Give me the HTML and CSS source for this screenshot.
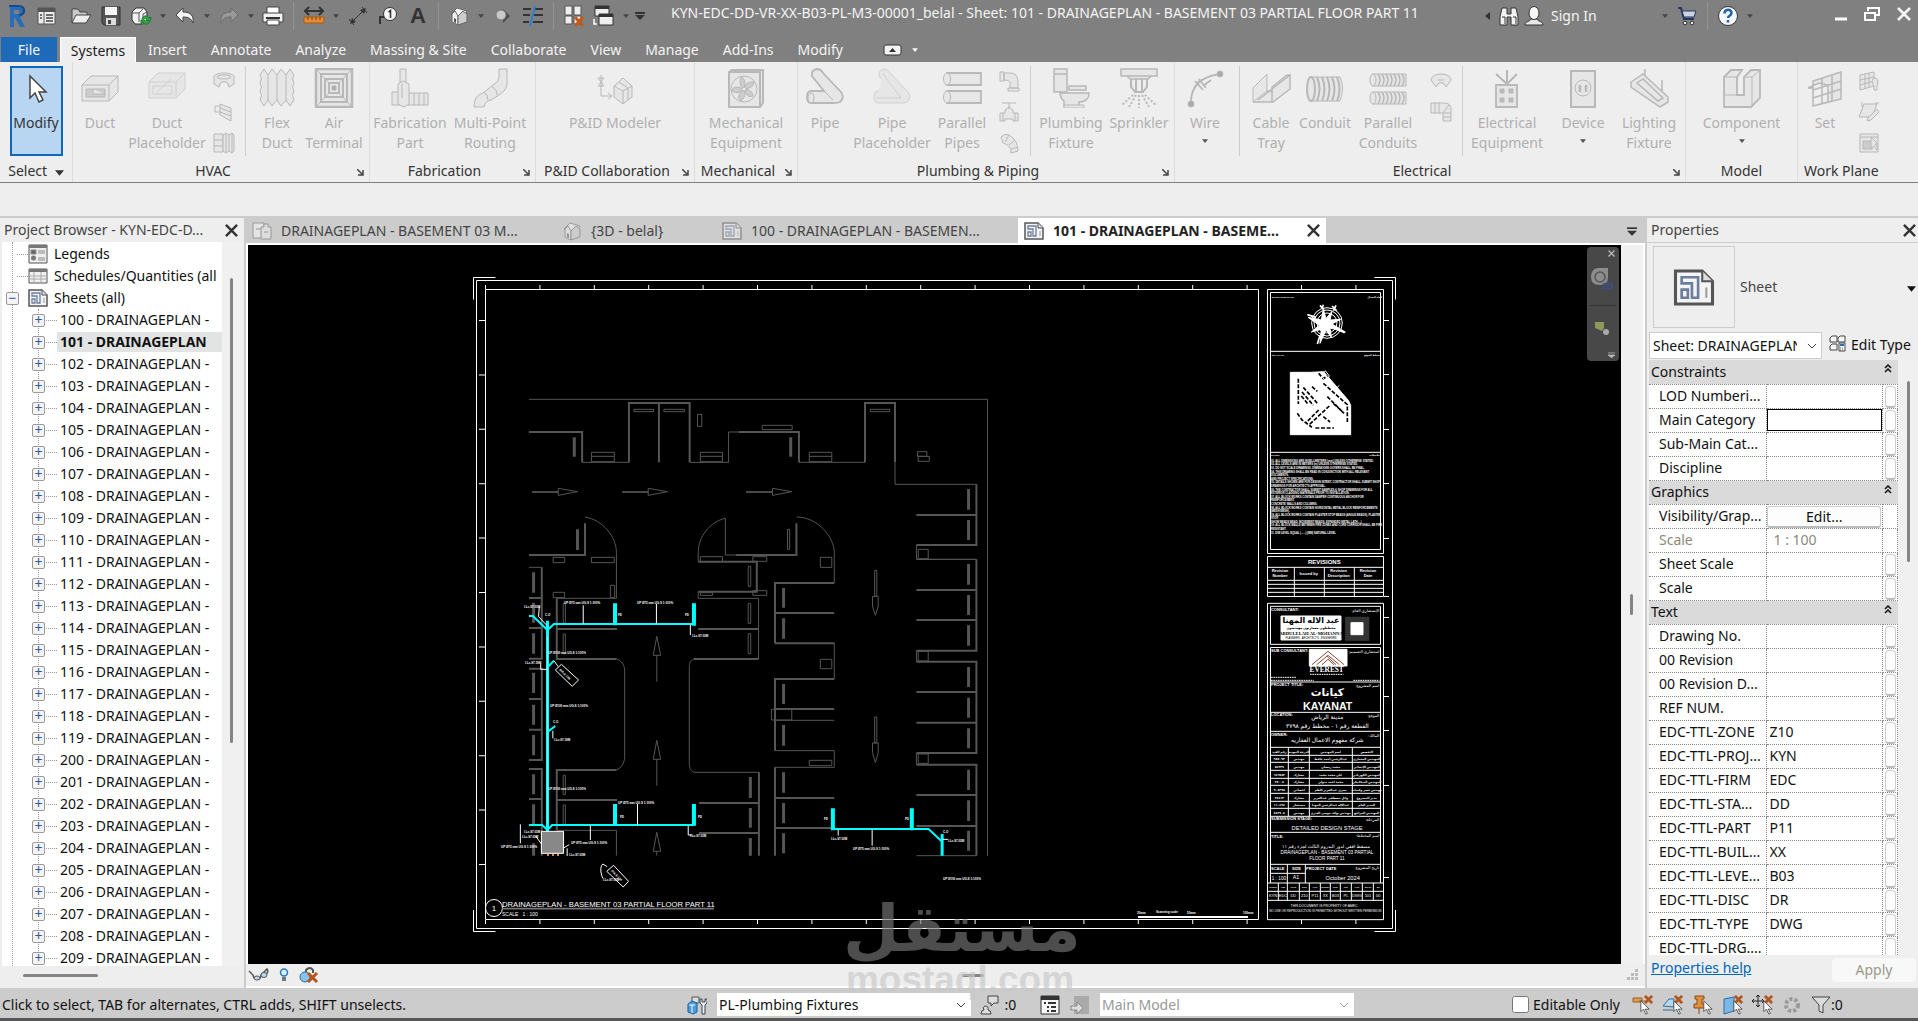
FILE: index.html
```html
<!DOCTYPE html>
<html lang="en">
<head>
  <meta charset="UTF-8">
  <title>KYN-EDC-DD-VR-XX-B03-PL-M3-00001_belal</title>
  <link rel="stylesheet" href="styles.css">
</head>
<body>

  <!-- shared icons -->
  <svg class="defs" aria-hidden="true">
    <symbol id="sheet" viewBox="0 0 20 18">
      <path d="M1 1h13l5 5v11H1z" fill="#f4f4f4" stroke="#555" stroke-width="1.5"/>
      <path d="M14 1v5h5" fill="#ddd" stroke="#555"/>
      <path d="M4 4h8v10H9V7H4zM4 10h3v4H4z" fill="none" stroke="#6b7f9c" stroke-width="1.3"/>
      <path d="M16 9v5" stroke="#999"/>
    </symbol>
    <symbol id="house" viewBox="0 0 20 20">
      <path d="M2 8l6-6 10 3-5 7z" fill="#f4f4f4" stroke="#666"/>
      <path d="M3 8v8l6 3v-9l-3-5z" fill="#eee" stroke="#666"/>
      <path d="M9 10l5-5 4 3v8l-9 3z" fill="#ccc" stroke="#666"/>
      <path d="M5 12l2 1v4l-2-1z" fill="#555"/>
    </symbol>
    <symbol id="caret" viewBox="0 0 8 5"><path d="M0 0h8L4 5z" fill="currentColor"/></symbol>
    <symbol id="close" viewBox="0 0 14 14"><path d="M1 1l12 12M13 1L1 13" stroke="currentColor" stroke-width="2.6"/></symbol>
    <symbol id="launch" viewBox="0 0 7 7"><path d="M0 0l5 5M6 1v5H1" fill="none" stroke="#444" stroke-width="1.5"/></symbol>
    <symbol id="chev" viewBox="0 0 10 6"><path d="M1 1l4 4 4-4" fill="none" stroke="currentColor"/></symbol>
    <symbol id="cursor" viewBox="0 0 12 18"><path d="M1 1v13l3-3 3 6 2-1-3-5h5z" fill="#fff" stroke="#444"/></symbol>
    <symbol id="redx" viewBox="0 0 10 10"><path d="M1 1l8 8M9 1L1 9" stroke="#b4561b" stroke-width="3"/></symbol>
  </svg>

  <header class="titlebar">
    <div class="qat">
      <button class="tool" aria-label="Application"><svg width="22" height="24" viewBox="0 0 22 24"><path d="M4 23V3h8c8 0 8 9 2 10l5 10h-5l-5-9H8v9z" fill="#2b6cb8"/><path d="M3 2h9c8 0 8 9 1 9" fill="none" stroke="#194a86" stroke-width="2"/><path d="M8 6h4c2 0 2 4 0 4H8z" fill="#808080"/></svg></button>
      <button class="tool" aria-label="Home"><svg width="20" height="20" viewBox="0 0 20 20"><path d="M1 2h17v16H1z" fill="#eee" stroke="#555"/><path d="M1 2h17v4H1z" fill="#555"/><path d="M7 6v12" stroke="#555"/><path d="M3 9h2M3 12h2M9 9h7M9 12h7M9 15h7" stroke="#444" stroke-width="1.5"/></svg></button>
      <button class="tool tool-gap" aria-label="Open"><svg width="22" height="18" viewBox="0 0 22 18"><path d="M2 16V2h6l2 3h7v3" fill="#c9c9c9" stroke="#444"/><path d="M2 16l4-8h15l-5 8z" fill="#eee" stroke="#444"/></svg></button>
      <button class="tool" aria-label="Save"><svg width="20" height="20" viewBox="0 0 20 20"><path d="M1 1h18v18H3l-2-2z" fill="#555" stroke="#333"/><path d="M4 1h12v8H4z" fill="#f4f4f4"/><path d="M5 12h10v7H5z" fill="#ddd"/><path d="M7 14h3v4H7z" fill="#444"/></svg></button>
      <button class="tool" aria-label="Synchronize"><svg width="22" height="20" viewBox="0 0 22 20"><path d="M2 6l4-4h8l3 4v9l-4 3H5l-3-4z" fill="#f2f2f2" stroke="#333"/><path d="M2 7h7v9M9 7l4-4M13 8v8M13 8l4-2" fill="none" stroke="#555"/><path d="M12 13c1-4 6-4 7-1l2-1-1 4-4-1 1-1M20 15c-1 4-6 4-7 1l-2 2v-4h4" fill="#35a34a" stroke="#1d7c30"/></svg></button>
      <button class="drop" aria-label="Synchronize options"><svg width="6" height="4"><use href="#caret"/></svg></button>
      <button class="tool" aria-label="Undo"><svg width="20" height="18" viewBox="0 0 20 18"><path d="M1 8l7-7v4c8 0 11 4 10 11-2-5-5-6-10-6v5z" fill="#f4f4f4" stroke="#444"/></svg></button>
      <button class="drop" aria-label="Undo list"><svg width="6" height="4"><use href="#caret"/></svg></button>
      <button class="tool" aria-label="Redo"><svg width="20" height="18" viewBox="0 0 20 18"><path d="M19 8l-7-7v4C4 5 1 9 2 16c2-5 5-6 10-6v5z" fill="#999" stroke="#6c6c6c"/></svg></button>
      <button class="drop" aria-label="Redo list"><svg width="6" height="4"><use href="#caret"/></svg></button>
      <button class="tool" aria-label="Print"><svg width="22" height="20" viewBox="0 0 22 20"><path d="M5 1h12v7H5z" fill="#fff" stroke="#444"/><path d="M1 7h20v9H1z" fill="#f2f2f2" stroke="#444"/><path d="M4 11h14v2H4z" fill="#333"/><path d="M5 14h12v5H5z" fill="#fff" stroke="#444"/></svg></button>
      <span class="qsep"></span>
      <button class="tool" aria-label="Measure"><svg width="22" height="20" viewBox="0 0 22 20"><path d="M2 5h18M6 1L2 5l4 4M16 1l4 4-4 4" fill="none" stroke="#333" stroke-width="2"/><path d="M1 11h20v6H1z" fill="#e58a35" stroke="#a85a13"/><path d="M5 11v3M9 11v3M13 11v3M17 11v3" stroke="#7a3f0a"/></svg></button>
      <button class="drop" aria-label="Measure options"><svg width="6" height="4"><use href="#caret"/></svg></button>
      <button class="tool" aria-label="Aligned dimension"><svg width="22" height="22" viewBox="0 0 22 22"><path d="M5 17L17 5M2 14l5 6M15 2l5 6" fill="none" stroke="#333"/><path d="M3 19l2-6 4 4zM19 3l-2 6-4-4z" fill="#333"/></svg></button>
      <button class="tool" aria-label="Tag"><svg width="20" height="20" viewBox="0 0 20 20"><path d="M2 18v-7h6" fill="none" stroke="#333" stroke-width="2"/><circle cx="12" cy="8" r="6.5" fill="#f6f6f6" stroke="#333"/><path d="M10.500 6l2-1.500V12" fill="none" stroke="#333" stroke-width="1.600"/></svg></button>
      <button class="tool tool-a" aria-label="Text">A</button>
      <span class="qsep"></span>
      <button class="tool" aria-label="3D view"><svg width="20" height="20"><use href="#house"/></svg></button>
      <button class="drop" aria-label="3D view options"><svg width="6" height="4"><use href="#caret"/></svg></button>
      <button class="tool" aria-label="Section"><svg width="18" height="20" viewBox="0 0 18 20"><path d="M9 3l7 7-7 7z" fill="#4b4b4b"/><circle cx="7" cy="9" r="5" fill="#c9c9c9" stroke="#777"/></svg></button>
      <button class="tool" aria-label="Thin lines"><svg width="22" height="20" viewBox="0 0 22 20"><path d="M1 3h8M13 3h8M1 9h7M12 9h9M1 16h6M11 16h10" stroke="#333" stroke-width="2"/><path d="M13 0L8 20" stroke="#2f7fd0" stroke-width="2"/></svg></button>
      <span class="qsep"></span>
      <button class="tool" aria-label="Close inactive views"><svg width="22" height="22" viewBox="0 0 22 22"><path d="M2 1h7v9H2zM11 1h7v9h-7zM2 11h7v8H2zM11 11h7v8h-7z" fill="#eee" stroke="#555"/><path d="M12 12l8 9M20 12l-8 9" stroke="#c05a16" stroke-width="3"/></svg></button>
      <button class="tool" aria-label="Switch windows"><svg width="22" height="22" viewBox="0 0 22 22"><path d="M2 1h14v10H2z" fill="#eee" stroke="#333"/><path d="M2 1h14v3H2z" fill="#333"/><path d="M6 9h14v11H6z" fill="#eee" stroke="#333"/><path d="M6 9h14v3H6z" fill="#333"/><path d="M1 14v5h3" fill="none" stroke="#fff" stroke-width="1.5"/></svg></button>
      <button class="drop" aria-label="Window list"><svg width="6" height="4"><use href="#caret"/></svg></button>
      <button class="drop" aria-label="Customize toolbar"><svg width="10" height="8" viewBox="0 0 10 8"><path d="M0 1h10" stroke="#333" stroke-width="2"/><path d="M0 3h10L5 8z" fill="#333"/></svg></button>
    </div>
    <h1 class="doc-title">KYN-EDC-DD-VR-XX-B03-PL-M3-00001_belal - Sheet: 101 - DRAINAGEPLAN - BASEMENT 03 PARTIAL FLOOR PART 11</h1>
    <div class="account">
      <button class="drop" aria-label="Collapse search"><svg width="5" height="8" viewBox="0 0 5 8"><path d="M5 0v8L0 4z" fill="#333"/></svg></button>
      <button class="tool" aria-label="Search"><svg width="20" height="20" viewBox="0 0 20 20"><path d="M3 2h5v6h4V2h5l2 9v8h-7v-8H8v8H1v-8z" fill="#f2f2f2" stroke="#333"/><path d="M3 11h3v7M14 11h3v7" fill="none" stroke="#333"/></svg></button>
      <button class="sign"><svg width="20" height="20" viewBox="0 0 20 20"><path d="M1 19c0-4 5-3 6-6h6c1 3 6 2 6 6z" fill="#e8e8e8" stroke="#333"/><ellipse cx="10" cy="7" rx="5" ry="6.500" fill="#f6f6f6" stroke="#333"/></svg>Sign In</button>
      <button class="drop" aria-label="Account menu"><svg width="6" height="4"><use href="#caret"/></svg></button>
      <button class="tool" aria-label="App store"><svg width="20" height="20" viewBox="0 0 20 20"><path d="M1 2h3l3 11h10" fill="none" stroke="#26365e" stroke-width="2"/><path d="M5 5h14l-2 6H7z" fill="#cdd3e0" stroke="#26365e"/><circle cx="8" cy="17" r="1.800" fill="#eee" stroke="#333"/><circle cx="15" cy="17" r="1.800" fill="#eee" stroke="#333"/></svg></button>
      <span class="qsep"></span>
      <button class="tool" aria-label="Help"><svg width="22" height="22" viewBox="0 0 22 22"><circle cx="11" cy="11" r="9.500" fill="#f6f9fc" stroke="#333"/><path d="M7.500 8.500c0-5 7-5 7-.5 0 3-3.500 2.500-3.500 5M11 15v2.500" fill="none" stroke="#1e62b4" stroke-width="2.500"/></svg></button>
      <button class="drop" aria-label="Help menu"><svg width="6" height="4"><use href="#caret"/></svg></button>
    </div>
    <div class="winbtns">
      <button aria-label="Minimize"><svg width="12" height="14" viewBox="0 0 12 14"><path d="M0 12h12" stroke="#fff" stroke-width="3"/></svg></button>
      <button aria-label="Restore"><svg width="16" height="14" viewBox="0 0 16 14"><path d="M4 4V1h11v7h-4M1 6h10v7H1z" fill="none" stroke="#fff" stroke-width="2"/></svg></button>
      <button aria-label="Close"><svg width="14" height="14"><use href="#close"/></svg></button>
    </div>
  </header>

  <nav class="tabs">
    <button class="tab file">File</button>
    <button class="tab active">Systems</button>
    <button class="tab">Insert</button>
    <button class="tab">Annotate</button>
    <button class="tab">Analyze</button>
    <button class="tab">Massing &amp; Site</button>
    <button class="tab">Collaborate</button>
    <button class="tab">View</button>
    <button class="tab">Manage</button>
    <button class="tab">Add-Ins</button>
    <button class="tab">Modify</button>
    <button class="tab-toggle" aria-label="Minimize ribbon"><svg width="19" height="12" viewBox="0 0 19 12"><rect x="1" y="1" width="17" height="10" rx="2" fill="#f2f2f2" stroke="#333"/><path d="M6 8h7L9.500 4z" fill="#333"/></svg><svg width="6" height="4"><use href="#caret"/></svg></button>
  </nav>

  <main class="ribbon">
    <section class="panel p-select">
      <div class="tools"><button class="big modify"><svg width="40" height="40" viewBox="0 0 40 40"><path d="M14 8v22l5-5 4 9 4-2-4-8h7z" fill="#fff" stroke="#444" stroke-width="1.500"/></svg>Modify</button></div>
      <div class="caption">Select <svg width="9" height="6"><use href="#caret"/></svg></div>
    </section>

    <section class="panel p-hvac">
      <div class="tools">
        <button class="big w54" disabled><svg width="40" height="40" viewBox="0 0 40 40"><path d="M2 17L11 8h27v16l-9 9H2z"/><path d="M2 17h27v16M29 17l9-9"/><path d="M6 21h19v8H6zM13 21v5h12" fill="#ccc"/></svg>Duct</button>
        <button class="big w80 faint" disabled><svg width="40" height="40" viewBox="0 0 40 40"><path d="M2 14L11 5h27v16l-9 9H2z"/><path d="M2 14h27v16M29 14l9-9"/><path d="M6 18h19v8H6zM10 24L24 11"/></svg>Duct Placeholder</button>
        <div class="smalls">
          <button disabled aria-label="Duct fitting"><svg width="22" height="22" viewBox="0 0 22 22"><path d="M1 6c3-4 17-4 20 0v8l-5 3-2-5H8l-2 5-5-3z"/><ellipse cx="11" cy="7" rx="7" ry="2"/></svg></button>
          <button disabled aria-label="Duct accessory"><svg width="22" height="22" viewBox="0 0 22 22"><path d="M7 3l11 4v13L7 14zM7 7l11 4M7 11l11 4M2 5h5M2 11h5M2 5v6"/></svg></button>
          <button disabled aria-label="Convert to flex duct"><svg width="22" height="22" viewBox="0 0 22 22"><path d="M1 2h9v18H1zM1 8h9M1 14h9"/><path d="M10 3l3-2 3 2 3-2 2 2v16l-2 2-3-2-3 2-3-2zM13 2v18M16 3v16M19 2v18"/></svg></button>
        </div>
        <span class="rsep"></span>
        <button class="big w54" disabled><svg width="40" height="40" viewBox="0 0 40 40"><path d="M3 7l4-6 4 6 4-6 5 6 4-6 5 6 4-6 4 6q-3 4 0 8-3 4 0 8-3 4 0 9l-4 6-4-6-5 6-4-6-5 6-4-6-4 6-4-6q3-5 0-9 3-4 0-8 3-4 0-8z"/><path d="M11 7v25M20 7v25M29 7v25"/></svg>Flex Duct</button>
        <button class="big w60" disabled><svg width="40" height="40" viewBox="0 0 40 40"><path d="M2 1h36v38H2z" stroke-width="2.500"/><path d="M7 6h26v28H7zM11 11h18v18H11zM15 15h10v10H15z" stroke-width="2"/><path d="M18 18h4v4h-4z" fill="#aaa"/><path d="M2 1l13 14M38 1L25 15M2 39l13-14M38 39L25 25"/></svg>Air Terminal</button>
      </div>
      <div class="caption">HVAC<button class="launch" aria-label="Mechanical settings"><svg width="7" height="7"><use href="#launch"/></svg></button></div>
    </section>

    <section class="panel p-fab">
      <div class="tools">
        <button class="big w80" disabled><svg width="40" height="40" viewBox="0 0 40 40"><path d="M10 1h6v14h-6zM2 24h10v13H2zM18 25h20v12H18z"/><path d="M8 16l5-3 6 3v20l-5 3-6-3zM24 25v12M29 25v12M34 25v12M12 16v14"/></svg>Fabrication Part</button>
        <button class="big w80" disabled><svg width="40" height="40" viewBox="0 0 40 40"><path d="M29 1h8v15q0 6-8 11l-8 5q-6 1-7 7H4q0-12 9-14l10-8q6-3 6-8z"/><path d="M22 19q5 2 5 8M14 24q4 3 4 8"/></svg>Multi-Point Routing</button>
      </div>
      <div class="caption">Fabrication<button class="launch" aria-label="Fabrication settings"><svg width="7" height="7"><use href="#launch"/></svg></button></div>
    </section>

    <section class="panel p-pid">
      <div class="tools">
        <button class="big" disabled><svg width="40" height="40" viewBox="0 0 40 40"><path d="M6 7v21h10M3 10h6l-6 8h6zM13 25l4 3-4 3" fill="none"/><path d="M19 18l9-8 9 8v11l-9 7-9-7zM19 18l9 5 9-5M28 23v13M24 14l9 6v12"/></svg>P&amp;ID Modeler</button>
      </div>
      <div class="caption">P&amp;ID Collaboration<button class="launch" aria-label="P&amp;ID settings"><svg width="7" height="7"><use href="#launch"/></svg></button></div>
    </section>

    <section class="panel p-mech">
      <div class="tools">
        <button class="big w80" disabled><svg width="40" height="40" viewBox="0 0 40 40"><path d="M3 4l3-2h31v33l-3 4H3zM3 4h31v35" stroke-width="2"/><circle cx="18" cy="21" r="13"/><path d="M18 21q-6-4-3-12 6 2 3 12 2-8 10-7 0 6-10 7 8 0 9 7-6 3-9-7 3 7-3 12-6-4 3-12-6 6-12 2 1-7 12-2" fill="#ccc"/><circle cx="18" cy="21" r="2" fill="#eee"/></svg>Mechanical Equipment</button>
      </div>
      <div class="caption">Mechanical<button class="launch" aria-label="Equipment settings"><svg width="7" height="7"><use href="#launch"/></svg></button></div>
    </section>

    <section class="panel p-plumb">
      <div class="tools">
        <button class="big w54" disabled><svg width="40" height="40" viewBox="0 0 40 40"><path d="M7 8q-1-6 5-7 4 0 6 4l18 19q4 6-1 10-2 1-6 1H6q-4 0-4-6t4-6h13L7 8z" stroke-width="1.800"/><ellipse cx="6" cy="30" rx="3" ry="5"/><path d="M19 23l9 9"/></svg>Pipe</button>
        <button class="big w80 faint" disabled><svg width="40" height="40" viewBox="0 0 40 40"><path d="M7 8q-1-6 5-7 4 0 6 4l18 19q4 6-1 10-2 1-6 1H6q-4 0-4-6t4-6h13L7 8z"/><path d="M5 30h24L11 6"/></svg>Pipe Placeholder</button>
        <button class="big w60" disabled><svg width="40" height="40" viewBox="0 0 40 40"><path d="M5 5h34v12H5zM5 23h34v12H5z" stroke-width="1.800"/><ellipse cx="5" cy="11" rx="3.500" ry="6"/><ellipse cx="5" cy="29" rx="3.500" ry="6"/></svg>Parallel Pipes</button>
        <div class="smalls">
          <button disabled aria-label="Pipe fitting"><svg width="22" height="22" viewBox="0 0 22 22"><path d="M2 2h4v9H2zM6 3h6q8 0 8 9v6h-8v-6q0-2-6-2zM10 18h11v3H10z"/></svg></button>
          <button disabled aria-label="Pipe accessory"><svg width="22" height="22" viewBox="0 0 22 22"><path d="M4 2h14M11 2v6M7 9l4-3 4 3v3h5v8h-5v-2H7v2H2v-8h5zM5 12v8M17 12v8"/></svg></button>
          <button disabled aria-label="Flex pipe"><svg width="22" height="22" viewBox="0 0 22 22"><path d="M3 5q3-4 8-2 9 5 9 16l-7 2q1-7-8-10z"/><path d="M7 10l4-7M11 13l6-5M13 17l7-2"/></svg></button>
        </div>
        <span class="rsep"></span>
        <button class="big w72" disabled><svg width="40" height="40" viewBox="0 0 40 40"><path d="M3 1h13v23H3zM3 6h13" stroke-width="1.500"/><path d="M18 18h17v4H18zM11 25h27q0 9-10 9v4H13v-5q-4-3-4-9z" stroke-width="1.500"/><path d="M13 37h20v3H13z"/></svg>Plumbing Fixture</button>
        <button class="big w64" disabled><svg width="40" height="40" viewBox="0 0 40 40"><path d="M2 1h36v7H2zM8 8h24l-3 3H11z" stroke-width="1.500"/><path d="M12 11v8l4 5M28 11v8l-4 5M17 11v12M23 11v12M15 24h10" stroke-width="2"/><path d="M14 27L3 37M17 27l-7 12M20 27v13M23 27l7 12M26 27l11 10" stroke-dasharray="2 2" stroke-width="2"/></svg>Sprinkler</button>
      </div>
      <div class="caption">Plumbing &amp; Piping<button class="launch" aria-label="Piping settings"><svg width="7" height="7"><use href="#launch"/></svg></button></div>
    </section>

    <section class="panel p-elec">
      <div class="tools">
        <button class="big w60" disabled><svg width="40" height="40" viewBox="0 0 40 40"><path d="M6 36Q5 10 35 6M10 13l8 9M14 11l7 9M9 20l6-8M18 18l8-6" fill="none" stroke-width="1.800"/><circle cx="6" cy="36" r="3" fill="#aaa"/><circle cx="35" cy="6" r="3" fill="#aaa"/></svg>Wire<svg class="more" width="6" height="4"><use href="#caret"/></svg></button>
        <span class="rsep"></span>
        <button class="big w54" disabled><svg width="40" height="40" viewBox="0 0 40 40"><path d="M2 20L16 6v17L2 34z"/><path d="M2 34h20L39 21V7L21 21 7 32M16 23h6M39 7h-3L21 19v15" stroke-width="1.500"/></svg>Cable Tray</button>
        <button class="big w54" disabled><svg width="40" height="40" viewBox="0 0 40 40"><path d="M6 9h29q5 10 0 24H6z"/><ellipse cx="6" cy="21" rx="4" ry="12" stroke-width="2"/><path d="M12 9q5 12 0 24M17 9q5 12 0 24M22 9q5 12 0 24M27 9q5 12 0 24M32 9q5 12 0 24" fill="none" stroke-width="2"/></svg>Conduit</button>
        <button class="big w72" disabled><svg width="40" height="40" viewBox="0 0 40 40"><path d="M5 6h33v12H5zM5 24h33v12H5z"/><ellipse cx="5" cy="12" rx="3" ry="6"/><ellipse cx="5" cy="30" rx="3" ry="6"/><path d="M10 6q4 6 0 12M14 6q4 6 0 12M18 6q4 6 0 12M22 6q4 6 0 12M26 6q4 6 0 12M30 6q4 6 0 12M34 6q4 6 0 12M10 24q4 6 0 12M14 24q4 6 0 12M18 24q4 6 0 12M22 24q4 6 0 12M26 24q4 6 0 12M30 24q4 6 0 12M34 24q4 6 0 12" fill="none" stroke-width="1.500"/></svg>Parallel Conduits</button>
        <div class="smalls">
          <button disabled aria-label="Cable tray fitting"><svg width="22" height="22" viewBox="0 0 22 22"><path d="M1 10q1-6 10-6t10 6l-5 7-3-4H9l-3 4z"/><path d="M8 10h6"/></svg></button>
          <button disabled aria-label="Conduit fitting"><svg width="22" height="22" viewBox="0 0 22 22"><path d="M1 2h13q7 0 7 6v12h-8v-8H1z"/><path d="M5 2v10M9 2v10M13 12h8M13 16h8M13 12l6-8"/></svg></button>
        </div>
        <span class="rsep"></span>
        <button class="big w80" disabled><svg width="40" height="40" viewBox="0 0 40 40"><path d="M9 17h21v22H9z" stroke-width="1.800"/><path d="M13 21h4v4h-4zM22 21h4v4h-4zM13 30h4v4h-4zM22 30h4v4h-4z" fill="#bbb"/><path d="M20 2v15M9 6l11 10L30 6" fill="none" stroke-width="2"/></svg>Electrical Equipment</button>
        <button class="big w72" disabled><svg width="40" height="40" viewBox="0 0 40 40"><path d="M8 3h24v36H8z" stroke-width="2"/><circle cx="20" cy="20" r="8"/><path d="M17 17v7M23 17v7" stroke-width="2.500"/></svg>Device<svg class="more" width="6" height="4"><use href="#caret"/></svg></button>
        <button class="big w60" disabled><svg width="40" height="40" viewBox="0 0 40 40"><path d="M2 14l12-8 25 23v5l-8 5L2 19zM8 15l6-4 20 19-5 3zM16 1v7M33 12v12" stroke-width="1.500"/></svg>Lighting Fixture</button>
      </div>
      <div class="caption">Electrical<button class="launch" aria-label="Electrical settings"><svg width="7" height="7"><use href="#launch"/></svg></button></div>
    </section>

    <section class="panel p-model">
      <div class="tools">
        <button class="big w80" disabled><svg width="40" height="40" viewBox="0 0 40 40"><path d="M2 9l7-7h11l-5 7v18h7V9l7-7h9v28l-9 9H2z" stroke-width="1.800"/><path d="M2 9h13M22 9h8l8-7M30 9v30M2 27h13"/></svg>Component<svg class="more" width="6" height="4"><use href="#caret"/></svg></button>
      </div>
      <div class="caption">Model</div>
    </section>

    <section class="panel p-work">
      <div class="tools">
        <button class="big w54" disabled><svg width="40" height="40" viewBox="0 0 40 40"><path d="M3 20h5v18l15-4v-17l-9-2zM8 13l28-9v27L8 38zM17 10v25M27 7v26M8 22l28-9M8 30l28-9" stroke-width="1.500"/></svg>Set</button>
        <div class="smalls">
          <button disabled aria-label="Show plane"><svg width="22" height="22" viewBox="0 0 22 22"><path d="M2 5l14-3v14L2 20zM7 4v15M11 3v14M2 10l14-3M2 15l14-4"/><path d="M14 12q0-4 3-4t3 4l-1 4v4h-3v-4z"/></svg></button>
          <button disabled aria-label="Reference plane"><svg width="22" height="22" viewBox="0 0 22 22"><path d="M6 3h13l-5 13H1zM4 1v5M17 2h4"/><path d="M10 17l9-9 2 3-8 8-4 1z"/></svg></button>
          <button disabled aria-label="Viewer"><svg width="22" height="22" viewBox="0 0 22 22"><path d="M2 2h18v18H2zM2 5h18"/><path d="M5 9h9v8H5z" fill="#ccc"/><path d="M13 5v11l3-2 3 4 1-2-3-4h3z"/></svg></button>
        </div>
      </div>
      <div class="caption left">Work Plane</div>
    </section>
  </main>

  <div class="options"></div>

  <div class="work">
    <aside class="browser">
      <div class="dock-head"><h2>Project Browser - KYN-EDC-D...</h2><button aria-label="Close browser"><svg width="13" height="13"><use href="#close"/></svg></button></div>
      <div class="tree-wrap">
        <div class="tree">
          <ul>
            <li class="node"><span class="twig"></span><svg width="20" height="20" viewBox="0 0 20 20"><path d="M1 1h18v18H1z" fill="#eee" stroke="#555"/><path d="M1 1h18v3H1z" fill="#777"/><path d="M3 6h5v4H3zM10 7h7M10 9h7M10 14h7M10 16h7" stroke="#888" fill="#666"/><circle cx="5.500" cy="14" r="2.500" fill="#777"/></svg>Legends</li>
            <li class="node"><span class="twig"></span><svg width="20" height="16" viewBox="0 0 20 16"><path d="M1 1h18v14H1z" fill="#f0f0f0" stroke="#555"/><path d="M1 1h18v3H1z" fill="#777"/><path d="M6 4v11M13 4v11M1 8h18M1 11h18" stroke="#aaa"/></svg>Schedules/Quantities (all</li>
            <li class="node"><button class="box" aria-label="Collapse">&minus;</button><svg width="20" height="18"><use href="#sheet"/></svg>Sheets (all)</li>
          </ul>
          <ul id="sheets" class="sheets"></ul>
        </div>
        <div class="vscroll"><span class="thumb"></span></div>
      </div>
      <div class="hscroll"><span class="thumb"></span></div>
    </aside>

    <section class="center">
      <div class="doctabs">
        <button class="doctab t1"><svg width="20" height="18" viewBox="0 0 20 18"><path d="M1 1h11v15H1z" fill="#e4e4e4" stroke="#999"/><path d="M9 5h3V2h4v3h3v12H9z" fill="#ddd" stroke="#999"/><path d="M4 7h5M12 10h4" stroke="#999"/></svg>DRAINAGEPLAN - BASEMENT 03 M...</button>
        <button class="doctab t2"><svg class="dim" width="20" height="20"><use href="#house"/></svg>{3D - belal}</button>
        <button class="doctab t3"><svg class="dim" width="20" height="18"><use href="#sheet"/></svg>100 - DRAINAGEPLAN - BASEMEN...</button>
        <button class="doctab current"><svg width="20" height="18"><use href="#sheet"/></svg>101 - DRAINAGEPLAN - BASEME...<svg class="x" width="13" height="13"><use href="#close"/></svg></button>
        <button class="tablist" aria-label="Tab list"><svg width="10" height="9" viewBox="0 0 12 10"><path d="M0 1h12" stroke="#333" stroke-width="2"/><path d="M0 4h12L6 10z" fill="#333"/></svg></button>
      </div>
      <div class="view">
        <div class="canvas">
          <svg class="drawing" viewBox="248 245 1373 719">
            <!-- sheet frame -->
            <g fill="none" stroke="#fff">
              <path d="M473.500 299.500v-22h22M1374.500 277.500h21v22M473.500 910v21.500h22M1374.500 931.500h21V910"/>
              <path d="M476.500 280.500h916v648h-916z"/>
              <path d="M485.500 289.500h773v630h-773z"/>
              <path d="M485 287H1360M485 922H1360" stroke-width="4" stroke-dasharray="1 53.400"/>
              <path d="M482 320v560" stroke-width="6" stroke-dasharray="1 53.400"/>
              <path d="M1384 320.500h5M1384 374.500h5M1384 429.500h5M1384 483.500h5M1384 538.500h5M1384 596.500h5M1384 617.500h5M1384 657.500h5M1384 696.500h5M1384 730.500h5M1384 785.500h5M1384 877.500h5"/>
              <path d="M1138 917h110" stroke-width="2"/>
            </g>

            <!-- architecture underlay -->
            <g class="walls" transform="translate(460 270) scale(.357143 .333333)">
              <path d="M193 388H1477V1757M1218 577V643H1446M743 745V855H773M350 741C400 750 438 800 438 848V985H271M743 745C700 755 667 800 667 848V875M667 965V985H836V1167M438 1167C450 1170 461 1185 461 1200V1460C461 1480 450 1495 438 1500M655 1167C645 1172 642 1180 642 1190V1480C642 1495 648 1507 658 1507H837M438 1681V1757M943 741C1000 741 1048 800 1048 848V939M1048 1120V1227M882 1351H1048M882 1442H1048V1492H882M1278 825V868H1446M1278 1142V1175M1278 1449V1484M1278 1757H1446M271 1681H438M1278 868H1446M342 577H473M643 577H752V486H780M949 577H1134M193 892H229"/>
              <path class="w2" d="M193 486H342V577M473 577V399H643V577M557 399V577M780 486H949V577M1134 577V399H1218V577M193 855H350V760M773 855H942V760M667 875H831V965H667M1446 643V825H1278M1278 735H1446M1446 868V1142H1278M1278 960H1446M1278 1050H1446M1278 1175H1446V1449H1278M1278 1266H1446M1278 1358H1446M1278 1484H1446V1757M1278 1575H1446M1278 1668H1446M229 892V1166H193M193 984H229M193 1074H229M193 1196H229V1470H193M193 1287H229M193 1379H229M193 1497H229V1757M193 1587H229M271 985V1167H438M271 1077H440M438 1500H271V1681M271 1590H440M836 1077H667M655 1167H836M837 1507V1757M669 1599H837M669 1689H837M882 1120V939H1048M882 1120H1048M882 1029H1048M1048 1227H882V1442M882 1317H1048M882 1492V1757M882 1584H1048M882 1674H1048"/>
              <path d="M487 418h55v7h-55zM571 418h58v7h-58zM1149 418h54v7h-54zM665 433h12v36h-12zM846 466h84v13h-84zM368 547h64v28h-64zM368 559h64M673 547h62v28h-62zM673 559h62M978 547h63v28h-63zM978 559h63M1281 545h26v14h-26zM1283 559h31v15h-31zM261 862h32v16h-32zM368 862h64v16h-64zM261 967h32v16h-32zM421 946h12v37h-12zM289 1000h6v60h-6zM289 1092h6v60h-6zM289 1516h6v58h-6zM289 1605h6v58h-6zM917 778h6v60h-6zM807 889h7v60h-7zM807 1000h7v60h-7zM807 1091h7v60h-7zM673 860h62v15h-62zM820 860h39v14h-39zM820 962h39v14h-39zM673 968h34v8h-34zM1009 862h32v30h-32zM1009 1168h32v28h-32zM978 1471h63v16h-63zM872 1318h57v32h-57zM1283 838h28v28h-28zM1283 1144h28v29h-28zM1283 1452h28v28h-28z"/>
              <path class="w3" d="M320 502V560M926 502V560M329 778V840M1424 657V719M1424 750V810M1424 882V944M1424 975V1035M1424 1066V1127M1424 1191V1251M1424 1283V1343M1424 1375V1435M1424 1499V1560M1424 1591V1653M1424 1682V1742M206 907V968M206 998V1058M206 1090V1151M206 1208V1269M206 1304V1364M206 1395V1456M206 1513V1573M206 1603V1664M206 1720V1757M906 954V1013M906 1045V1106M906 1242V1302M906 1365V1427M906 1507V1568M906 1599V1660M906 1690V1750M813 1521V1584M813 1614V1673M813 1704V1757"/>
              <path d="M202 665H275M202 667H275M275 655L329 665 275 676zM454 665H527M454 667H527M527 655L581 665 527 676zM801 665H875M801 667H875M875 655L929 665 875 676zM551 1235V1156M551 1099L562 1156H541zM551 1547V1468M551 1411L562 1468H541zM551 1757V1744M551 1687L562 1744H541zM1161 901h6v78h-6zM1155 979H1171V1008L1163 1036 1155 1008zM1161 1341h6v78h-6zM1155 1419H1171V1448L1163 1478 1155 1448z"/>
            </g>

            <!-- drainage pipes -->
            <g class="pipes" transform="translate(460 270) scale(.357143 .333333)">
              <path d="M193 1038H204L245 1080 263 1062H655M193 1665H230L245 1680 258 1665H655M1044 1677H1312L1350 1715M247 1190L263 1172M247 1384L267 1368"/>
              <path class="w3" d="M245 1052V1684M1350 1692V1757"/>
              <path class="w4" d="M434 1000V1066M655 1000V1067M434 1602V1665M655 1602V1667M1044 1615V1681M1265 1615V1681"/>
            </g>
            <g class="leaders" transform="translate(460 270) scale(.357143 .333333)">
              <path d="M345 1006V1062M550 1002V1062M645 1064V1095M497 1602V1665M365 1665V1710M169 1663V1720M639 1667V1695L650 1695M1059 1679V1697M1154 1677V1727M222 1010L220 1040 243 1066M226 1180V1198H243M263 1172L275 1190M260 1382V1405M1352 1708H1366M212 1698L240 1740M245 1684L232 1702M306 1724L264 1750M300 1735V1758M412 1790L400 1782C390 1790 395 1815 400 1825"/>
              <path d="M245 1100V1660" stroke-opacity=".5"/>
              <path d="M284 1183L332 1230 314 1249 267 1200zM430 1786L472 1834 457 1851 411 1804z"/>
              <path d="M228 1684H290V1750H228z" fill="#888"/>
            </g>
            <path d="M548 854v2M553 854v2M558 854v2" stroke="#d98b4a" stroke-width="2"/>
            <g class="note">
              <text x="564" y="604">UP Ø75 mm UG.S 1:100%</text>
              <text x="637" y="604">UP Ø75 mm UG.S 1:100%</text>
              <text x="548" y="654">UP Ø100 mm UG.S 1:100%</text>
              <text x="550" y="707">UP Ø100 mm UG.S 1:100%</text>
              <text x="548" y="790">UP Ø100 mm UG.S 1:100%</text>
              <text x="618" y="804">UP Ø75 mm UG.S 1:100%</text>
              <text x="571" y="844">UP Ø75 mm UG.S 1:100%</text>
              <text x="501" y="848">UP Ø75 mm UG.S 1:100%</text>
              <text x="853" y="850">UP Ø75 mm UG.S 1:100%</text>
              <text x="943" y="880">UP Ø100 mm UG.S 1:100%</text>
              <text x="524" y="608">I.L=-97.03M</text>
              <text x="692" y="637">I.L=-97.03M</text>
              <text x="525" y="664">I.L=-97.19M</text>
              <text x="554" y="741">I.L=-97.19M</text>
              <text x="690" y="837">I.L=-97.03M</text>
              <text x="831" y="840">I.L=-97.03M</text>
              <text x="948" y="842">I.L=-97.03M</text>
              <text x="524" y="833">I.L=-97.03M</text>
              <text x="522" y="838">I.L=-97.03M</text>
              <text x="569" y="856">I.L=-97.03M</text>
              <text x="603" y="881">I.L=-97.03M</text>
              <text x="545" y="616">C.O</text>
              <text x="553" y="723">C.O</text>
              <text x="943" y="833">C.O</text>
              <text x="618" y="616">FD</text>
              <text x="685" y="616">FD</text>
              <text x="620" y="818">FD</text>
              <text x="698" y="818">FD</text>
              <text x="824" y="820">FD</text>
              <text x="905" y="820">FD</text>
              <text x="1137" y="914">20mm</text>
              <text x="1156" y="913">Scanning scale</text>
              <text x="1187" y="914">50mm</text>
              <text x="1243" y="914">100mm</text>
              <text transform="translate(559 670) rotate(44)">DIA.&amp; 13B</text>
              <text transform="translate(611 871) rotate(46)">DIA.&amp; 13A</text>
            </g>
            <circle cx="494" cy="908" r="8.500" fill="none" stroke="#fff"/>
            <text x="494" y="911" class="view-no">1</text>
            <g class="view-title" transform="translate(502 900) scale(.333333)">
              <text x="0" y="21">DRAINAGEPLAN - BASEMENT 03 PARTIAL FLOOR PART 11</text>
              <text x="0" y="48" class="view-scale">SCALE &#160; 1 : 100</text>
              <path d="M0 26h636" stroke="#777" stroke-width="5"/>
            </g>

            <!-- title block -->
            <g class="block" transform="translate(1240 270) scale(.333333)">
              <path d="M82.500 58.500h348v792h-348zM91.500 67.500h330v771h-330zM91 244h331M91 547h331M82.500 859.500h348v120h-348zM82 892h349M82 931h349M82 943h349M82 955h349M82 967h349M163 892v87M253 892v87M343 892v87"/>
              <path d="M82.500 1000h348v949h-348zM91.500 1009h330v114h-330zM91.500 1839V1132.500h330V1839M91 1236h331M91 1327h331M91 1384h331M91 1432h331M91 1456h331M91 1477h331M91 1501h331M91 1525h331M91 1546h331M91 1570h331M91 1594h331M91 1615h331M91 1639h331M145 1432v207M208 1432v207M337 1432v207M91 1687h331M91 1783h331M91 1810h105M82 1839h349M142 1783v56M196 1783v56M82 1864h349M82 1891h349M115 1839v52M142 1839v52M178 1839v52M208 1839v52M241 1839v52M271 1839v52M301 1839v52M334 1839v52M367 1839v52M400 1839v52"/>
              <!-- north arrow -->
              <circle cx="261" cy="159" r="46"/><circle cx="261" cy="159" r="39"/><circle cx="261" cy="159" r="30"/>
              <path d="M250 118l8 28 18-22-6 26 32-2-26 14 40 24-46-12 4 28-16-22-18 40 4-42-30 8 24-20-34-24 40 8z" fill="#fff"/>
              <path d="M240 106l12 14M250 104l-4 14M276 108l14 14M288 106l-8 16M202 134l26 8M290 178l24 10M240 196l-8 26" stroke-width="5"/>
              <!-- key plan -->
              <path d="M151 307h60l40-2 74 86 7 15v88H151z" fill="#fff"/>
              <path d="M175 326v76M190 352l44 50M186 366l34 40M184 378l20 24M250 340l72 64v56M262 380l50 50M280 400l30 28M236 420l-40 40M268 408l-60 56M226 474h56M172 430l14 20 30 22M236 310l14 16 12-8M250 440l20 16M216 350l16 14" stroke="#000" stroke-width="5" stroke-dasharray="12 5"/>
              <path d="M246 320l10-18 12 16-10 16zM290 354l8-8" />
              <text x="95" y="84">NORTH DIRECTION:</text><text x="382" y="84">اتجاه الشمال</text>
              <text x="95" y="258">KEY PLAN:</text><text x="372" y="258">مخطط الموقع</text>
              <text x="93" y="557">NOTES:</text><text x="388" y="557">ملاحظات</text>
              <g class="notes">
                <text x="93" y="575">01. ALL DIMENSIONS ARE IN MILLIMETERS (mm) UNLESS OTHERWISE STATED.</text>
                <text x="93" y="586">02. ALL LEVELS ARE IN METERS (m) UNLESS OTHERWISE STATED.</text>
                <text x="93" y="597">03. DO NOT SCALE DRAWINGS. DIMENSIONS GOVERN SHALL BE FINAL.</text>
                <text x="93" y="608">04. THIS DRAWING SHALL BE READ IN CONJUNCTION WITH ALL RELEVANT</text>
                <text x="93" y="618">DOCUMENTS,</text>
                <text x="93" y="629">AND PROJECT SPECIFICATIONS.</text>
                <text x="93" y="640">05. DETAILS SHOWN ARE FOR DESIGN INTENT. CONTRACTOR SHALL SUBMIT SHOP</text>
                <text x="93" y="650">DRAWINGS FOR ARCHITECTS APPROVAL.</text>
                <text x="93" y="662">06. THE CONTRACTOR SHALL SUBMIT SAMPLES &amp; SHOP DRAWINGS FOR ALL</text>
                <text x="93" y="673">EXTERIOR CLADDING MATERIALS PRIOR TO INSTALLATION.</text>
                <text x="93" y="683">07. ALL BLOCK WORKS CONTAIN DAMPER CONTINUOUS ANCHOR FOR</text>
                <text x="93" y="694">REINFORCEMENT.</text>
                <text x="93" y="705">CONCRETE WALLS AND COLUMNS.</text>
                <text x="93" y="716">08. ALL BLOCK WORKS CONTAIN HORIZONTAL METAL BLOCK REINFORCEMENTS</text>
                <text x="93" y="727">(MESH MESH).</text>
                <text x="93" y="737">09. ALL BLOCK WORKS CONTAIN PLASTER STOP BEADS (ANGLE BEADS), PLASTER</text>
                <text x="93" y="748">STOP,</text>
                <text x="93" y="759">SHOW BEADS BEAD, MOVEMENT BEADS, EXPANDED METAL LATH....)</text>
                <text x="93" y="769">10. ALL BLOCK WALLS BETWEEN FIRE ZONES AND CORE CORRIDOR SHALL BE FIRE</text>
                <text x="93" y="780">RESISTANT.</text>
                <text x="93" y="792">11. DIM LEVEL EQUAL (......) (MM) NATURAL LEVEL</text>
              </g>
              <text x="253" y="881" class="mid t18 b">REVISIONS</text>
              <g class="mid t12 b">
                <text x="120" y="907">Revision</text><text x="120" y="921">Number</text>
                <text x="206" y="915">Issued by</text>
                <text x="296" y="907">Revision</text><text x="296" y="921">Description</text>
                <text x="384" y="907">Revision</text><text x="384" y="921">Date</text>
              </g>
              <g class="t12 b">
                <text x="93" y="1022">CONSULTANT:</text><text x="93" y="1145">SUB CONSULTANT:</text><text x="93" y="1248">PROJECT TITLE:</text>
                <text x="93" y="1338">LOCATION:</text><text x="93" y="1398">OWNER:</text><text x="93" y="1650">SUBMISSION STAGE:</text><text x="93" y="1703">TITLE:</text>
                <text x="93" y="1799">SCALE</text><text x="156" y="1799">SIZE</text><text x="198" y="1799">PROJECT DATE</text>
              </g>
              <g class="ar t12">
                <text x="418" y="1026">الإستشاري العام:</text><text x="418" y="1149">استشاري التصميم:</text><text x="418" y="1252">اسم المشروع:</text>
                <text x="418" y="1342">الموقع:</text><text x="418" y="1400">المالك:</text><text x="418" y="1653">المرحلة:</text><text x="418" y="1702">اسم المخطط:</text><text x="418" y="1797">تاريخ المشروع</text>
              </g>
              <path d="M123 1038h180v72H123z" fill="#fff"/>
              <text x="213" y="1060" class="mid t24 b ink">عبد الاله المهنا</text>
              <text x="213" y="1077" class="mid t10 b ink">مخططون معماريون مهندسون</text>
              <text x="213" y="1094" class="mid t14 b ink serif">ABDULELAH AL-MOHANNA</text>
              <text x="213" y="1107" class="mid t8 ink">PLANNERS . ARCHITECTS . ENGINEERS</text>
              <path d="M316 1041h71v71h-71z" fill="#333" stroke="#444" stroke-dasharray="2 3"/>
              <path d="M333 1058h36v36h-36z" fill="#fff"/>
              <path d="M208 1138h113v50H208z" fill="#fff"/>
              <path d="M216 1184l48-40 48 40M230 1184l34-28 34 28M246 1184l18-16 18 16M260 1158l28 26" stroke="#8a4a3a" stroke-width="3"/>
              <text x="260" y="1206" class="mid t20 b serif">EVEREST</text>
              <path d="M210 1213h100M93 1222h76M93 1231h128M340 1231h78" stroke-dasharray="5 2"/>
              <text x="262" y="1279" class="mid t34">كيانات</text>
              <text x="263" y="1320" class="mid t34">KAYANAT</text>
              <text x="262" y="1347" class="mid t18">مدينة الرياض</text>
              <text x="262" y="1374" class="mid t18">القطعة رقم ١ - مخطط رقم ٣٧٩٨</text>
              <text x="262" y="1417" class="mid t18">شركة مفهوم الاعمال العقاريه</text>
              <g class="mid t9 b" id="staff"></g>
              <text x="261" y="1679" class="mid t17">DETAILED DESIGN STAGE</text>
              <text x="258" y="1733" class="mid t14">مسقط افقي لدور البدروم الثالث لجزء رقم ١١</text>
              <text x="261" y="1753" class="mid t14">DRAINAGEPLAN - BASEMENT 03 PARTIAL</text>
              <text x="261" y="1771" class="mid t14">FLOOR PART 11</text>
              <text x="117" y="1831" class="mid t14">1 : 100</text><text x="168" y="1828" class="mid t16">A1</text><text x="308" y="1829" class="mid t17">October 2024</text>
              <g class="mid code" id="code"></g>
              <text x="252" y="1912" class="mid t10">THIS DOCUMENT IS PROPERTY OF AMEC</text>
              <text x="256" y="1926" class="mid t9">NO USE OR REPRODUCTION IS PERMITTED WITHOUT WRITTEN PERMISSION</text>
            </g>
          </svg>
          <div class="navbar">
            <button aria-label="Close bar"><svg width="7" height="7"><use href="#close"/></svg></button>
            <button class="wheel" aria-label="Steering wheel"><svg width="26" height="24" viewBox="0 0 26 24"><path d="M9 1h9v9q0 8-8 8-9 0-9-8 0-9 8-9z" fill="#8d8d8d"/><circle cx="10" cy="10" r="5" fill="none" stroke="#555" stroke-width="1.500"/><text x="12" y="22">2D</text></svg></button>
            <button class="zoomer" aria-label="Zoom"><svg width="18" height="18" viewBox="0 0 18 18"><path d="M1 2h9v6l-2 3-7-3z" fill="#8a9a5a"/><circle cx="12" cy="12" r="3" fill="#aaa"/></svg></button>
            <button aria-label="Bar options"><svg width="7" height="6" viewBox="0 0 10 8"><path d="M0 1h10M0 4h10L5 8z" stroke="#bbb" fill="#bbb"/></svg></button>
          </div>
        </div>
        <div class="vscroll"><span class="thumb"></span></div>
      </div>
      <div class="viewbar">
        <button aria-label="Temporary hide"><svg width="21" height="16" viewBox="0 0 21 16"><path d="M1 4l4 4q1 5 5 4 3 0 3-4l6-6q2 3-1 5" fill="none" stroke="#555" stroke-width="1.500"/><ellipse cx="9" cy="11" rx="3" ry="2" fill="#bcd9ee" stroke="#555"/><ellipse cx="16" cy="8" rx="3" ry="2.500" fill="#bcd9ee" stroke="#555"/></svg></button>
        <button aria-label="Reveal hidden"><svg width="10" height="14" viewBox="0 0 10 14"><circle cx="5" cy="4.500" r="3.500" fill="#d9eefb" stroke="#2a7ab8" stroke-width="1.500"/><path d="M3 9h4v4H3z" fill="#777"/></svg></button>
        <button aria-label="Constraints"><svg width="20" height="16" viewBox="0 0 20 16"><path d="M7 6V3q4-4 7 0v3" fill="none" stroke="#555" stroke-width="2"/><circle cx="6" cy="10" r="5" fill="#8cc0e6" stroke="#2a6ea8"/><path d="M9 6l9 9M18 6l-9 9" stroke="#b4561b" stroke-width="3"/></svg></button>
        <span class="thumb"></span>
        <svg class="grip" width="12" height="12" viewBox="0 0 12 12"><path d="M8 0h3v3H8zM4 4h3v3H4zM8 4h3v3H8zM0 8h3v3H0zM4 8h3v3H4zM8 8h3v3H8z" fill="#bbb"/></svg>
      </div>
      <div class="watermark"><span class="wm-ar" lang="ar">مستقل</span><span class="wm-en">mostaql.com</span></div>
    </section>

    <aside class="props">
      <div class="dock-head"><h2>Properties</h2><button aria-label="Close properties"><svg width="13" height="13"><use href="#close"/></svg></button></div>
      <div class="type">
        <span class="preview"><svg width="42" height="37"><use href="#sheet"/></svg></span>
        <span class="type-name">Sheet</span>
        <button aria-label="Type list"><svg width="9" height="6"><use href="#caret"/></svg></button>
      </div>
      <div class="instance">
        <div class="combo"><select aria-label="Instance"><option>Sheet: DRAINAGEPLAN - BASEMENT</option></select><svg width="10" height="6"><use href="#chev"/></svg></div>
        <button class="edit-type"><svg width="17" height="17" viewBox="0 0 17 17"><path d="M1 3l2-2h5v6H1zM9 3l2-2h5v6H9zM1 11l2-2h5v6H1z" fill="#f6f6f6" stroke="#444"/><path d="M10 8h6v8h-6z" fill="#fff" stroke="#444"/><path d="M11 10h4" stroke="#2a6ebb" stroke-width="2"/><path d="M11 13h4M11 15h4" stroke="#555" stroke-dasharray="1 1"/></svg>Edit Type</button>
      </div>
      <div class="grid-wrap">
        <div class="grid-clip">
          <table class="grid">
            <colgroup><col class="c-key"><col><col class="c-btn"></colgroup>
            <tbody id="grid"></tbody>
          </table>
        </div>
        <div class="vscroll"><span class="thumb"></span></div>
      </div>
      <div class="props-foot"><a href="#help">Properties help</a><button disabled>Apply</button></div>
    </aside>
  </div>

  <footer class="status">
    <span class="hint">Click to select, TAB for alternates, CTRL adds, SHIFT unselects.</span>
    <button aria-label="Worksets"><svg width="20" height="20" viewBox="0 0 20 20"><path d="M5 2h7v6H5z" fill="#ddd" stroke="#555"/><path d="M1 9l4-3 5 2v9l-4 2-5-2z" fill="#4a9bdc" stroke="#17609c"/><path d="M5 10v8M2 10h6" stroke="#fff"/><path d="M13 4v4l2 2v9h3V10l2-2V4h-2v3h-3V4z" fill="#eee" stroke="#345"/></svg></button>
    <div class="combo"><select aria-label="Active workset"><option>PL-Plumbing Fixtures</option></select><svg width="10" height="6"><use href="#chev"/></svg></div>
    <button class="req"><svg width="20" height="20" viewBox="0 0 20 20"><path d="M8 1h10v7h-4l-3 3V8H8zM5 11q4 0 3 4 3 0 3 4H1q0-4 3-4-2-3 1-4z" fill="#ddd" stroke="#444"/></svg>:0</button>
    <button aria-label="Design options"><svg width="20" height="20" viewBox="0 0 20 20"><path d="M1 1h18v18H1z" fill="#f6f6f6" stroke="#333"/><path d="M1 1h18v4H1z" fill="#333"/><path d="M4 8h2M8 8h8M7 12h2M11 12h5M7 16h2M11 16h5" stroke="#333" stroke-width="2"/></svg></button>
    <button aria-label="Active only"><svg width="20" height="20" viewBox="0 0 20 20"><path d="M4 1h15v18H4z" fill="#aaa"/><path d="M1 11h6V7l6 6-6 6v-4H1z" fill="#ddd" stroke="#888"/></svg></button>
    <div class="combo off"><select aria-label="Design option" disabled><option>Main Model</option></select><svg width="10" height="6"><use href="#chev"/></svg></div>
    <label class="editable"><input type="checkbox">Editable Only</label>
    <div class="picks">
      <button aria-label="Select links"><svg width="22" height="20" viewBox="0 0 22 20"><path d="M1 3h9v4H1zM7 6h6" fill="#d9a05a" stroke="#a05a18"/><use href="#redx" x="12" y="0" width="9" height="9"/><use href="#cursor" x="8" y="5" width="10" height="15"/></svg></button>
      <button aria-label="Select underlay"><svg width="22" height="20" viewBox="0 0 22 20"><path d="M1 15h10M1 11L7 4h5v8z" fill="#b7d6ee" stroke="#2a6ea8"/><use href="#redx" x="12" y="0" width="9" height="9"/><use href="#cursor" x="11" y="5" width="10" height="15"/></svg></button>
      <button aria-label="Select pinned"><svg width="22" height="20" viewBox="0 0 22 20"><path d="M3 1h9v3h-2v5h3v4H2V9h3V4H3zM7 13v6" fill="#e0903a" stroke="#8a4a10"/><use href="#cursor" x="11" y="5" width="10" height="15"/></svg></button>
      <button aria-label="Select by face"><svg width="22" height="20" viewBox="0 0 22 20"><path d="M2 4l10-2v14L2 19z" fill="#7db7e6" stroke="#2a6ea8"/><use href="#redx" x="12" y="0" width="9" height="9"/><use href="#cursor" x="11" y="5" width="10" height="15"/></svg></button>
      <button aria-label="Drag on selection"><svg width="22" height="20" viewBox="0 0 22 20"><path d="M6 1v10M1 6h10M4 2l2-2 2 2M4 10l2 2 2-2M2 4L0 6l2 2M10 4l2 2-2 2" fill="none" stroke="#222"/><use href="#redx" x="12" y="0" width="9" height="9"/><use href="#cursor" x="11" y="5" width="10" height="15"/></svg></button>
      <button aria-label="Background processes"><svg width="22" height="20" viewBox="0 0 22 20"><circle cx="10" cy="10" r="6" fill="none" stroke="#999" stroke-width="4" stroke-dasharray="3 2"/></svg></button>
      <button class="filter"><svg width="20" height="20" viewBox="0 0 20 20"><path d="M1 2h18l-7 8v8l-4-2v-6z" fill="#ddd" stroke="#444"/></svg>:0</button>
    </div>
  </footer>

  <script>
    // sheet list
    const sheets = document.getElementById('sheets');
    for (let n = 100; n < 210; n++) {
      if (n > 119 && n < 200) continue;
      const active = n === 101;
      sheets.innerHTML += `
        <li class="node"><button class="box" aria-label="Expand ${n}">+</button><span class="twig"></span><span class="name${active ? ' active' : ''}">${n} - DRAINAGEPLAN${active ? '' : ' -'}</span></li>`;
    }

    // property rows: [name, value, kind]
    const rows = [
      ['Constraints'],
      ['LOD Numberi...', ''], ['Main Category', '', 'focus'], ['Sub-Main Cat...', ''], ['Discipline', ''],
      ['Graphics'],
      ['Visibility/Grap...', 'Edit...', 'button'], ['Scale', '1 : 100', 'readonly'], ['Sheet Scale', ''], ['Scale', ''],
      ['Text'],
      ['Drawing No.', ''], ['00 Revision', ''], ['00 Revision D...', ''], ['REF NUM.', ''],
      ['EDC-TTL-ZONE', 'Z10'], ['EDC-TTL-PROJ...', 'KYN'], ['EDC-TTL-FIRM', 'EDC'], ['EDC-TTL-STA...', 'DD'],
      ['EDC-TTL-PART', 'P11'], ['EDC-TTL-BUIL...', 'XX'], ['EDC-TTL-LEVE...', 'B03'], ['EDC-TTL-DISC', 'DR'],
      ['EDC-TTL-TYPE', 'DWG'], ['EDC-TTL-DRG....', '']
    ];
    let html = '';
    rows.forEach(([name, value, kind], i) => {
      if (value === undefined) {
        html += `<tr class="group"><th colspan="3">${name}<svg width="8" height="9" viewBox="0 0 8 9"><path d="M1 4l3-3 3 3M1 8l3-3 3 3" fill="none" stroke="#111" stroke-width="1.5"/></svg></th></tr>`;
        return;
      }
      const locked = kind === 'button' || kind === 'readonly';
      const cell = kind === 'button'
        ? `<button id="p${i}" class="edit">${value}</button>`
        : `<input id="p${i}" value="${value}" ${kind === 'readonly' ? 'disabled' : ''}>`;
      html += `
        <tr class="${kind || ''}">
          <td class="key"><label for="p${i}">${name}</label></td>
          <td class="val">${cell}</td>
          <td class="btn">${locked ? '' : `<button aria-label="Associate ${name}"></button>`}</td>
        </tr>`;
    });
    document.getElementById('grid').innerHTML = html;

    // title block tables
    const staff = [
      ['رقم القيد', 'الدرجة المهنية', 'اسم المهندس', 'التخصص'],
      ['٩٥٧٠٩٢', 'مهندس', 'عبدالرحمن احمد حافظ', 'المهندس المعماري'],
      ['٥٤٣٣٩', 'مهندس', 'محمد رمضان', 'المهندس الإنشائي'],
      ['٦٤٦٧٨٢', 'مشارك', 'علي محمد محمد', 'المهندس الكهربائي'],
      ['٢٧٠٠٨', 'مشارك', 'محمد احمد متولي', 'المهندس الميكانيكي'],
      ['٩٠٨٣٩٨', 'اخصائي', 'يسري عبدالعزيز كاظم', 'مهندس حصر وكميات'],
      ['٢٧٤١٣', 'مشارك', 'وائل مصطفى عبدالعزيز', 'مدير المشروع'],
      ['١١٠٤٩٤', 'مستشار', 'عبدالإله عبدالرحمن المهنا', 'المدير العام'],
      ['٥٤٢٩٠٨', 'مهندس', 'مهندس نواف موسى العنزي', 'المهندس المراجع']
    ];
    const sx = [118, 177, 272, 380];
    let out = '';
    staff.forEach((row, r) => row.forEach((t, c) => { out += `<text x="${sx[c]}" y="${1448 + r * 23}">${t}</text>`; }));
    document.getElementById('staff').innerHTML = out;

    const code = [['PROJECT','KYN'],['FIRM','EDC'],['STAGE','DD'],['ZONE','Z10'],['PART','P11'],['BUILDING','XX'],['LEVEL','B03'],['DISC','PL'],['TYPE','DWG'],['DRG.NO','101'],['REV','00']];
    const cx = [99, 129, 160, 193, 225, 256, 286, 318, 351, 384, 415];
    document.getElementById('code').innerHTML = code.map(([k, v], i) =>
      `<text class="k" x="${cx[i]}" y="1854">${k}</text><text x="${cx[i]}" y="1882">${v}</text>`).join('');
  </script>
</body>
</html>
```
FILE: styles.css
```css
* {
  box-sizing: border-box;
}
html, body {
  height: 100%;
}
body {
  margin: 0;
  display: flex;
  flex-direction: column;
  overflow: hidden;
  background: #eee;
  color: #111;
  font: 14px/20px "Noto Sans", "Open Sans", sans-serif;
}
button, input, select {
  font: inherit;
  color: inherit;
}
button {
  padding: 0;
  border: 0;
  background: none;
}
h1, h2 {
  margin: 0;
  font-size: 14px;
  font-weight: normal;
}
ul {
  margin: 0;
  padding: 0;
  list-style: none;
}
svg {
  flex: none;
}
.defs {
  position: absolute;
  width: 0;
  height: 0;
}

/* title bar */
.titlebar {
  display: flex;
  height: 37px;
  background: #808080;
  color: #f4f4f4;
}
.qat, .account, .winbtns {
  display: flex;
  align-items: center;
  height: 32px;
}
.qat {
  padding-left: 2px;
}
.tool {
  display: flex;
  justify-content: center;
  width: 30px;
}
.tool-gap {
  margin-left: 4px;
}
.tool-a {
  color: #333;
  font: bold 22px/24px "Liberation Sans", sans-serif;
}
.drop {
  display: flex;
  justify-content: center;
  width: 14px;
  color: #444;
}
.qsep {
  width: 1px;
  height: 28px;
  margin: 0 5px;
  background: #939393;
}
.doc-title {
  flex: 1;
  margin-left: 24px;
  line-height: 26px;
  white-space: nowrap;
}
.sign {
  display: flex;
  align-items: center;
  gap: 7px;
  width: 134px;
}
.winbtns {
  gap: 17px;
  margin-left: 78px;
  padding-right: 7px;
}

/* ribbon tabs */
.tabs {
  display: flex;
  height: 25px;
  padding-left: 1px;
  background: #808080;
  color: #f4f4f4;
}
.tab {
  padding: 0 12px;
  line-height: 25px;
}
.tab.file {
  width: 56px;
  margin-right: 3px;
  background: #1f6ab8;
}
.tab.active {
  width: 76px;
  padding: 0;
  border: 1px solid #fff;
  border-bottom: 0;
  background: #eee;
  color: #222;
}
.tab-toggle {
  display: flex;
  align-items: center;
  gap: 10px;
  margin-left: 28px;
}

/* ribbon */
.ribbon {
  display: flex;
  height: 121px;
  border-bottom: 1px solid #808080;
  background: #eee;
}
.panel {
  display: flex;
  flex: none;
  flex-direction: column;
  border-right: 1px solid #dcdcdc;
}
.p-select { width: 73px; }
.p-hvac { width: 297px; }
.p-fab { width: 166px; }
.p-pid { width: 159px; }
.p-mech { width: 103px; }
.p-plumb { width: 377px; }
.p-elec { width: 511px; }
.p-model { width: 112px; }
.p-work { flex: 1; border-right: 0; }
.tools {
  display: flex;
  height: 98px;
  padding-top: 4px;
}
.p-select .tools, .p-pid .tools, .p-mech .tools, .p-model .tools {
  justify-content: center;
}
.big {
  display: flex;
  flex-direction: column;
  align-items: center;
  height: 90px;
  padding-top: 2px;
  line-height: 20px;
}
.big > svg:first-child {
  margin-bottom: 5px;
}
.big:disabled {
  color: #b0b0b0;
}
.big:disabled svg, .smalls svg {
  fill: #e6e6e6;
  stroke: #b8b8b8;
}
.big:disabled .more {
  margin-top: 6px;
  color: #555;
  stroke: none;
}
.faint:disabled svg {
  stroke: #d0d0d0;
}
.modify {
  width: 53px;
  padding-top: 0;
  border: 2px solid #1068b8;
  background: #b8d6f2;
  color: #333;
}
.w54 { width: 54px; }
.w60 { width: 60px; }
.w64 { width: 64px; }
.w72 { width: 72px; }
.w80 { width: 80px; }
.smalls {
  display: flex;
  flex-direction: column;
  gap: 9px;
  width: 34px;
  padding-top: 4px;
  align-items: center;
}
.smalls button {
  height: 22px;
}
.rsep {
  width: 1px;
  height: 90px;
  margin: 0 4px;
  background: #ccc;
}
.caption {
  position: relative;
  padding-right: 16px;
  color: #333;
  text-align: center;
  line-height: 22px;
  white-space: nowrap;
}
.p-select .caption, .p-model .caption {
  padding-right: 0;
}
.caption svg {
  margin-left: 4px;
}
.caption.left {
  padding-left: 6px;
  text-align: left;
}
.launch {
  position: absolute;
  right: 5px;
}
.options {
  height: 33px;
}

/* work area */
.work {
  display: flex;
  flex: 1;
  min-height: 0;
  border-top: 2px solid #ccc;
  background: #ccc;
}
.dock-head {
  display: flex;
  justify-content: space-between;
  align-items: center;
  height: 24px;
  padding: 0 6px 0 4px;
  background: #eee;
  color: #444;
  white-space: nowrap;
}
.dock-head button, .doctab .x {
  color: #333;
  line-height: 0;
}
.props .dock-head {
  padding-right: 2px;
}
.thumb {
  display: block;
  border-radius: 2px;
  background: #858585;
}

.browser {
  display: flex;
  flex-direction: column;
  width: 244px;
  margin-right: 2px;
  background: #eee;
}
.tree-wrap {
  display: flex;
  flex: 1;
  min-height: 0;
  padding-left: 2px;
}
.tree {
  position: relative;
  flex: 1;
  overflow: hidden;
  padding-top: 1px;
  background: #fff;
}
.tree::before {
  content: "";
  position: absolute;
  top: 0;
  bottom: 0;
  left: 10px;
  border-left: 1px dotted #999;
}
.node {
  display: flex;
  position: relative;
  align-items: center;
  height: 22px;
  padding-left: 4px;
  white-space: nowrap;
}
.node > svg {
  width: 20px;
  margin-right: 6px;
}
.twig {
  width: 11px;
  margin-left: 11px;
  border-top: 1px dotted #999;
}
.box {
  width: 13px;
  height: 13px;
  margin-right: 9px;
  border: 1px solid #999;
  border-radius: 2px;
  background: #f4f4f4;
  color: #2a5aa5;
  font-size: 14px;
  line-height: 10px;
}
.sheets {
  position: relative;
}
.sheets::before {
  content: "";
  position: absolute;
  top: 0;
  bottom: 0;
  left: 36px;
  border-left: 1px dotted #999;
}
.sheets .node {
  padding-left: 30px;
}
.sheets .box {
  margin-right: 0;
}
.sheets .twig {
  margin-left: 1px;
}
.name {
  flex: 1;
  padding-left: 3px;
}
.name.active {
  background: #e2e4e4;
  font-weight: bold;
}
.vscroll {
  width: 22px;
  background: #f0f0f0;
}
.vscroll .thumb {
  width: 3px;
  margin: 36px auto 0;
}
.browser .thumb {
  height: 465px;
  margin-left: 8px;
}
.browser .hscroll {
  height: 22px;
}
.browser .hscroll .thumb {
  width: 75px;
  height: 3px;
  margin: 8px 0 0 23px;
}

/* views */
.center {
  position: relative;
  z-index: 1;
  display: flex;
  flex: 1;
  flex-direction: column;
  min-width: 0;
}
.doctabs {
  display: flex;
  height: 25px;
}
.doctab {
  display: flex;
  flex: none;
  align-items: center;
  gap: 9px;
  padding-left: 6px;
  color: #444;
  white-space: nowrap;
}
.t1 { width: 310px; }
.t2 { width: 160px; }
.t3 { width: 302px; }
.current {
  width: 308px;
  padding-right: 6px;
  background: #fff;
  color: #222;
  font-weight: bold;
}
.current .x {
  margin-left: auto;
}
.dim {
  opacity: .5;
}
.tablist {
  margin: 0 8px 0 auto;
}
.view {
  display: flex;
  flex: 1;
  min-height: 0;
  border: 2px solid #fff;
  border-bottom: 0;
}
.canvas {
  position: relative;
  flex: 1;
  background: #000;
}
.drawing {
  display: block;
  width: 100%;
  height: 100%;
}
.view .thumb {
  height: 21px;
  margin: 349px 9px 0;
}
.viewbar {
  display: flex;
  align-items: center;
  gap: 10px;
  height: 24px;
  padding: 0 6px 0 2px;
  border-bottom: 2px solid #fff;
  background: #eee;
}
.viewbar button {
  height: 16px;
  line-height: 0;
}
.viewbar .thumb {
  width: 22px;
  height: 3px;
  margin: 0 auto;
}
.navbar {
  position: absolute;
  top: 2px;
  right: 2px;
  display: flex;
  flex-direction: column;
  align-items: center;
  width: 32px;
  height: 114px;
  padding: 3px 2px;
  border-radius: 4px;
  background: #484848;
  color: #bbb;
}
.navbar button {
  line-height: 0;
}
.navbar > button:first-child, .navbar > button:last-child {
  align-self: flex-end;
  padding: 0 2px;
}
.wheel {
  padding: 10px 0 14px;
  border-bottom: 1px solid #333;
}
.drawing ~ .navbar .wheel text {
  fill: #35509a;
  font: bold 9px "Liberation Sans", sans-serif;
}
.zoomer {
  flex: 1;
}

/* drawing */
.walls, .pipes, .leaders {
  fill: none;
}
.walls path, .pipes path, .leaders path {
  vector-effect: non-scaling-stroke;
}
.walls { stroke: #565656; }
.walls .w2 { stroke-width: 2px; }
.walls .w3 { stroke-width: 3px; }
.pipes { stroke: #0ff; stroke-width: 2px; }
.pipes .w3 { stroke-width: 3px; }
.pipes .w4 { stroke-width: 4px; }
.leaders { stroke: #fff; }
.drawing text {
  fill: #fff;
  font-family: "Liberation Sans", "DejaVu Sans", sans-serif;
}
.note text { font-size: 3px; font-weight: bold; }
.view-no { font-size: 8px; text-anchor: middle; }
.view-title text { font-size: 23px; }
.view-title .view-scale { font-size: 15px; }
.block { fill: none; stroke: #fff; stroke-width: 3px; }
.block text { stroke: none; font-size: 7px; font-weight: bold; }
.block .mid { text-anchor: middle; }
.block text.mid, .block .mid text { font-weight: normal; }
.block .ar text { direction: rtl; font-weight: normal; }
.block text.b, .block .b text { font-weight: bold; }
.block .notes text, .block text.t8 { font-size: 8px; }
.block text.t9, .block .t9 text { font-size: 9px; }
.block text.t10 { font-size: 10px; }
.block .t12 text, .block .code text { font-size: 12px; }
.block text.t14 { font-size: 14px; }
.block .code .k { font-size: 5px; font-weight: bold; }
.block text.t16 { font-size: 16px; }
.block text.t17 { font-size: 17px; }
.block text.t18 { font-size: 18px; }
.block text.t20 { font-size: 22px; }
.block text.t24 { font-size: 24px; }
.block text.t34 { font-size: 32px; font-weight: bold; }
.drawing .block text.ink { fill: #000; }
.drawing .block text.serif { font-family: "Liberation Serif", serif; }

.watermark {
  position: absolute;
  right: 568px;
  bottom: -10px;
  width: 234px;
  color: #777;
  text-align: center;
  opacity: .65;
  pointer-events: none;
}
.wm-ar {
  display: block;
  font: bold 65px/66px "DejaVu Sans", sans-serif;
}
.wm-en {
  display: block;
  color: #c8c8c8;
  font: bold 37px/36px "Liberation Sans", sans-serif;
}

/* properties */
.props {
  display: flex;
  flex-direction: column;
  width: 271px;
  margin-left: 2px;
  background: #eee;
}
.type {
  display: flex;
  align-items: center;
  height: 89px;
  padding: 0 2px 0 6px;
  border-top: 1px solid #ccc;
}
.preview {
  display: flex;
  align-items: center;
  justify-content: center;
  width: 82px;
  height: 82px;
  border: 1px solid #ccc;
}
.type-name {
  flex: 1;
  padding-left: 5px;
  color: #444;
}
.instance {
  display: flex;
  align-items: center;
  gap: 7px;
  height: 29px;
  padding-left: 2px;
}
.combo {
  position: relative;
  width: 173px;
}
.combo select {
  display: block;
  width: 100%;
  height: 27px;
  padding: 0 24px 0 3px;
  border: 1px solid #ccc;
  border-radius: 0;
  background: #fff;
  appearance: none;
}
.combo svg {
  position: absolute;
  top: 11px;
  right: 5px;
  color: #444;
}
.edit-type {
  display: flex;
  gap: 5px;
  height: 22px;
  white-space: nowrap;
}
.grid-wrap {
  display: flex;
  flex: 1;
  min-height: 0;
  padding-left: 2px;
}
.grid-clip {
  flex: 1;
  overflow: hidden;
}
.grid {
  width: 100%;
  table-layout: fixed;
  border-collapse: collapse;
  background: #fff;
}
.c-key {
  width: 117px;
}
.c-btn {
  width: 15px;
}
.grid tr {
  height: 24px;
}
.grid th {
  position: relative;
  padding: 0 2px;
  background: #dadada;
  font-weight: normal;
  text-align: left;
}
.grid th svg {
  position: absolute;
  top: 4px;
  right: 6px;
}
.grid td {
  height: 24px;
  padding: 0;
  border: 1px dotted #888;
  border-left: 0;
  vertical-align: top;
}
.grid .key {
  padding-left: 10px;
  white-space: nowrap;
}
.grid label {
  line-height: 21px;
}
.grid input {
  display: block;
  width: 100%;
  height: 22px;
  padding: 0 3px 1px;
  border: 0;
  background: none;
}
.grid .focus input {
  border: 1px solid #000;
}
.readonly {
  color: #8a8a7a;
}
.grid .readonly input {
  padding-left: 7px;
}
.edit {
  display: block;
  width: 114px;
  height: 22px;
  margin: 1px auto 0;
  border: 1px solid #ccc;
  border-bottom: 2px solid #bbb;
  border-radius: 3px;
  background: #fdfdfd;
  line-height: 19px;
}
.btn button {
  display: block;
  width: 11px;
  height: 22px;
  margin: 1px auto 0;
  border: 1px solid #ccc;
  border-bottom: 2px solid #bbb;
  border-radius: 4px;
  background: #fdfdfd;
}
.props .vscroll {
  width: 20px;
}
.props .vscroll .thumb {
  height: 181px;
  margin: 21px auto 0;
}
.props-foot {
  display: flex;
  justify-content: space-between;
  height: 33px;
  padding: 3px 2px 0 4px;
}
.props-foot a {
  color: #0067b8;
}
.props-foot button {
  width: 84px;
  height: 24px;
  border-radius: 4px;
  background: #f8f8f8;
  color: #9a9a8a;
}

/* status bar */
.status {
  display: flex;
  align-items: center;
  height: 33px;
  padding-top: 3px;
  border-bottom: 3px solid #555;
  background: #ccc;
}
.status button {
  display: flex;
  align-items: center;
  justify-content: center;
  width: 30px;
  height: 20px;
}
.hint {
  width: 682px;
  padding-left: 2px;
  white-space: nowrap;
}
.status .combo {
  width: 254px;
  margin-left: 5px;
}
.status .combo select {
  height: 23px;
  padding-left: 2px;
  border: 0;
}
.status .combo svg {
  top: 9px;
}
.off select:disabled {
  opacity: 1;
  color: #999;
}
.off svg {
  opacity: .5;
}
.status .req {
  gap: 5px;
  width: 64px;
  padding-right: 10px;
}
.editable {
  display: flex;
  align-items: center;
  gap: 4px;
  margin-left: auto;
  white-space: nowrap;
}
.editable input {
  width: 17px;
  height: 17px;
  margin: 0;
}
.picks {
  display: flex;
  margin-left: 8px;
  padding-right: 72px;
}
.status .filter {
  width: 38px;
}
```
